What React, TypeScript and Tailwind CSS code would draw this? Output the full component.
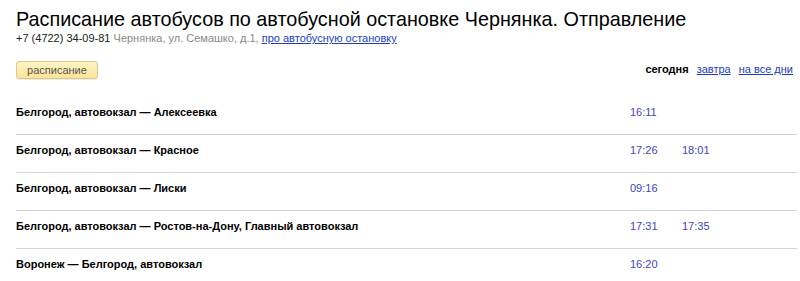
const rows = [
  { name: "Белгород, автовокзал — Алексеевка", times: ["16:11"] },
  { name: "Белгород, автовокзал — Красное", times: ["17:26", "18:01"] },
  { name: "Белгород, автовокзал — Лиски", times: ["09:16"] },
  { name: "Белгород, автовокзал — Ростов-на-Дону, Главный автовокзал", times: ["17:31", "17:35"] },
  { name: "Воронеж — Белгород, автовокзал", times: ["16:20"] },
];

export default function App() {
  return (
    <div className="bg-white w-[800px] h-[281px] overflow-hidden font-['Liberation_Sans',Arial,sans-serif] text-black">
      <div className="pl-[16px] pr-[3px] pt-[6px]">
        <h1 className="text-[19.8px] leading-[26px] font-normal">
          Расписание автобусов по автобусной остановке Чернянка. Отправление
        </h1>
        <div className="text-[11px] leading-[14px] mt-[-1px]">
          <span className="text-[#222]">+7 (4722) 34-09-81</span>{" "}
          <span className="text-[#888]">Чернянка, ул. Семашко, д.1,</span>{" "}
          <a href="#" className="text-[#1a3dc1] underline">про автобусную остановку</a>
        </div>

        <div className="flex items-center justify-between mt-[15px] h-[19px]">
          <button className="h-[18px] w-[82px] rounded-[3px] border border-[#d9c98a] bg-gradient-to-b from-[#fff4c4] to-[#fbe497] text-[11px] leading-[16px] text-[#555] shadow-[0_1px_0_rgba(0,0,0,0.08)]">
            расписание
          </button>
          <div className="flex items-center gap-[8px] text-[11px] pr-[4px]">
            <span className="font-bold">сегодня</span>
            <a href="#" className="text-[#1a3dc1] underline">завтра</a>
            <a href="#" className="text-[#1a3dc1] underline">на все дни</a>
          </div>
        </div>

        <div className="mt-[18px]">
          {rows.map((r, i) => (
            <div
              key={i}
              className={`flex items-start pt-[9px] h-[38px] text-[11px] leading-[13px] ${i < rows.length - 1 ? "border-b border-[#d4d4d4]" : ""}`}
            >
              <div className="w-[614px] font-bold">{r.name}</div>
              {r.times.map((t) => (
                <div key={t} className="w-[52px] text-[#3b45c4]">{t}</div>
              ))}
            </div>
          ))}
        </div>
      </div>
    </div>
  );
}
